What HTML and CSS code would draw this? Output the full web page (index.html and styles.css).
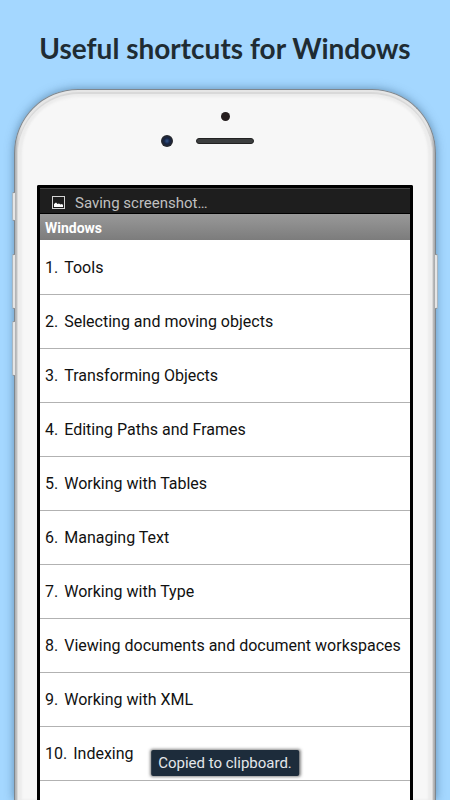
FILE: index.html
```html
<!DOCTYPE html>
<html lang="en">
<head>
<meta charset="utf-8">
<meta name="viewport" content="width=device-width, initial-scale=1">
<title>Useful shortcuts for Windows</title>
<link rel="stylesheet" href="styles.css">
</head>
<body>
<h1 class="headline">Useful shortcuts for Windows</h1>
<main class="phone">
  <span class="key key-mute"></span>
  <span class="key key-up"></span>
  <span class="key key-down"></span>
  <span class="key key-power"></span>
  <div class="face">
    <div class="bezel">
      <span class="sensor"></span>
      <div class="earpiece">
        <span class="camera"></span>
        <span class="speaker"></span>
      </div>
    </div>
    <div class="screen">
      <div class="status">
        <svg class="picture" viewBox="0 0 14 14" aria-hidden="true">
          <rect x="0.5" y="0.5" width="12" height="12" fill="none" stroke="#d4d4d4"/>
          <path d="M2 11V8L4 6.5 5.5 8 7 7.5 8.500 8.500 10 8 11 9V11Z" fill="#fff"/>
        </svg>
        <span>Saving screenshot…</span>
      </div>
      <h2 class="section">Windows</h2>
      <ul class="list">
        <li class="row"><span>1.</span><span>Tools</span></li>
        <li class="row"><span>2.</span><span>Selecting and moving objects</span></li>
        <li class="row"><span>3.</span><span>Transforming Objects</span></li>
        <li class="row"><span>4.</span><span>Editing Paths and Frames</span></li>
        <li class="row"><span>5.</span><span>Working with Tables</span></li>
        <li class="row"><span>6.</span><span>Managing Text</span></li>
        <li class="row"><span>7.</span><span>Working with Type</span></li>
        <li class="row"><span>8.</span><span>Viewing documents and document workspaces</span></li>
        <li class="row"><span>9.</span><span>Working with XML</span></li>
        <li class="row"><span>10.</span><span>Indexing</span></li>
      </ul>
    </div>
  </div>
</main>
<div class="toast" role="status">Copied to clipboard.</div>
</body>
</html>
```
FILE: styles.css
```css
* {
  box-sizing: border-box;
}

body {
  margin: 0;
  height: 100vh;
  overflow: hidden;
  display: flex;
  flex-direction: column;
  background: #a4d7ff;
  font-family: Roboto, "Liberation Sans", sans-serif;
  color: #111;
}

.headline {
  margin: 0;
  padding-top: 30px;
  height: 89px;
  flex: none;
  font: bold 28px/36px Lato, "Liberation Sans", sans-serif;
  text-align: center;
  white-space: nowrap;
  color: #1f2c33;
}

.phone {
  position: relative;
  flex: 1;
  min-height: 0;
  margin: 0 14px;
  padding: 2px 2px 0;
  border: solid #7e868d;
  border-width: 1px 1px 0;
  border-radius: 64px 64px 0 0;
  background: linear-gradient(90deg, #aeb0b2, #d8d8d8 4px, #e6e6e6 8px, #e6e6e6 calc(100% - 8px), #d4d4d4 calc(100% - 4px), #a6a8aa);
  box-shadow: 0 0 10px rgba(40, 80, 115, 0.55);
}

.face {
  height: 100%;
  padding: 0 19px;
  border: solid #d9d9d9;
  border-width: 2px 1px 0;
  border-radius: 62px 62px 0 0;
  background: #f7f7f7;
  box-shadow: inset 0 3px 3px #ececec, inset 4px 0 2px #ececec, inset -4px 0 2px #ececec;
}

.bezel {
  height: 91px;
  padding-top: 18px;
  display: flex;
  flex-direction: column;
  align-items: center;
  gap: 14px;
}

.sensor {
  width: 9px;
  height: 9px;
  border-radius: 50%;
  background: #251d1e;
}

.earpiece {
  position: relative;
  width: 58px;
  height: 12px;
  display: flex;
  align-items: center;
}

.speaker {
  width: 100%;
  height: 6px;
  border: 1px solid #222;
  border-radius: 3px;
  background: #3c3e3f;
}

.camera {
  position: absolute;
  left: -35px;
  width: 12px;
  height: 12px;
  border-radius: 50%;
  background: radial-gradient(circle, #34568c 0, #172443 35%, #26282d 65%, #4a4b4e 100%);
}

.key {
  position: absolute;
  left: -3px;
  width: 3px;
  height: 55px;
  border: 1px solid #8d9194;
  border-right: 0;
  border-left-color: #a9b6c0;
  border-radius: 2px 0 0 2px;
  background: #e5e5e5;
}

.key-mute {
  top: 102px;
  height: 29px;
}

.key-up {
  top: 164px;
}

.key-down {
  top: 231px;
}

.key-power {
  top: 164px;
  left: auto;
  right: -3px;
  border: 1px solid #8d9194;
  border-left: 0;
  border-right-color: #a9b6c0;
  border-radius: 0 2px 2px 0;
}

.screen {
  height: calc(100% - 91px);
  border: 3px solid #000;
  border-bottom: 0;
  border-radius: 2px 2px 0 0;
  background: #fff;
  overflow: hidden;
}

.status {
  height: 26px;
  padding: 3px 12px 0;
  display: flex;
  align-items: center;
  gap: 9px;
  border-top: 1px solid #484848;
  border-bottom: 1px solid #000;
  background: #1e1e1e;
  color: #c0c0c0;
  font-size: 15px;
  line-height: 20px;
}

.picture {
  width: 14px;
  height: 14px;
}

.section {
  margin: 0;
  height: 26px;
  padding: 0 5px;
  background: linear-gradient(#999, #7c7c7c);
  color: #fff;
  font-size: 14px;
  font-weight: bold;
  line-height: 28px;
}

.list {
  margin: 0;
  padding: 1px 0 0;
  list-style: none;
}

.row {
  height: 54px;
  padding-left: 5px;
  display: flex;
  align-items: center;
  gap: 6px;
  border-bottom: 1px solid #b2b2b2;
  font-size: 16px;
  white-space: nowrap;
}

.toast {
  position: absolute;
  left: 50%;
  bottom: 24px;
  transform: translateX(-50%);
  padding: 0 7px;
  border-radius: 2px;
  background: #1d2c3b;
  box-shadow: 0 0 3px 1px rgba(60, 60, 60, 0.6);
  color: #e4e7ea;
  font-size: 15px;
  line-height: 26px;
  white-space: nowrap;
}
```
